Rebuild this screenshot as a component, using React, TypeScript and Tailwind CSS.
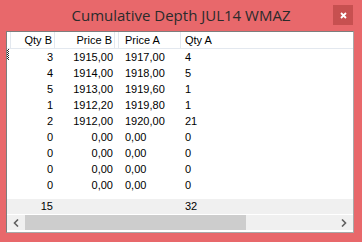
const rows = [
  ['3', '1915,00', '1917,00', '4'],
  ['4', '1914,00', '1918,00', '5'],
  ['5', '1913,00', '1919,60', '1'],
  ['1', '1912,20', '1919,80', '1'],
  ['2', '1912,00', '1920,00', '21'],
  ['0', '0,00', '0,00', '0'],
  ['0', '0,00', '0,00', '0'],
  ['0', '0,00', '0,00', '0'],
  ['0', '0,00', '0,00', '0'],
]

const cols = 'grid grid-cols-[4px_44px_60px_4px_62px_1fr]'

export default function App() {
  return (
    <div className="w-[362px] h-[242px] bg-[#e8686b] flex flex-col">
      {/* Title bar */}
      <div className="h-[31px] grid grid-cols-[1fr_auto_1fr]">
        <div />
        <div className="pt-[3px] text-[15px] leading-[24px] text-[#2b2b2b] font-['Open_Sans',sans-serif]">
          Cumulative Depth JUL14 WMAZ
        </div>
        <div className="flex justify-end pt-[5px] pr-[9px]">
          <div className="w-[20px] h-[20px] bg-[#c75050] flex items-center justify-center">
            <svg width="7" height="7" viewBox="0 0 7 7">
              <path d="M1 1 L6 6 M6 1 L1 6" stroke="#fff" strokeWidth="1.8" />
            </svg>
          </div>
        </div>
      </div>

      {/* Client area */}
      <div className="ml-[6px] w-[348px] h-[202px] border border-[#7d7d7d] border-r-[#a8a8a8] border-b-[#a8a8a8] bg-white flex flex-col font-['Liberation_Sans',Arial,sans-serif] text-[11px] text-black">
        {/* Header */}
        <div className={`${cols} h-[17px] leading-[16px] border-b border-[#e3e8ef]`}>
          <div className="border-r border-[#e3e8ef]" />
          <div className="text-right pr-[2px] border-r border-[#e3e8ef]">Qty B</div>
          <div className="text-right pr-[2px] border-r border-[#e3e8ef]">Price B</div>
          <div className="border-r border-[#e3e8ef]" />
          <div className="pl-[6px] border-r border-[#e3e8ef]">Price A</div>
          <div className="pl-[4px]">Qty A</div>
        </div>

        {/* Rows */}
        <div className="flex flex-col">
          {rows.map((r, i) => (
            <div key={i} className={`${cols} h-[16px] leading-[16px]`}>
              <div className="flex items-start">
                {i === 0 && (
                  <div className="w-[2px] h-[11px] bg-[repeating-conic-gradient(#222_0_25%,#fff_0_50%)] bg-[length:2px_2px]" />
                )}
              </div>
              <div className="text-right pr-[2px]">{r[0]}</div>
              <div className="text-right pr-[2px]">{r[1]}</div>
              <div />
              <div className="pl-[6px]">{r[2]}</div>
              <div className="pl-[4px]">{r[3]}</div>
            </div>
          ))}
        </div>
        <div className="flex-1" />

        {/* Totals */}
        <div className={`${cols} h-[16px] leading-[15px] bg-[#f0f0f0] border-b border-white`}>
          <div />
          <div className="text-right pr-[2px]">15</div>
          <div />
          <div />
          <div />
          <div className="pl-[4px]">32</div>
        </div>

        {/* Horizontal scrollbar */}
        <div className="h-[15px] bg-[#f0f0f0] flex items-stretch">
          <div className="w-[18px] flex items-center justify-center">
            <svg width="6" height="8" viewBox="0 0 6 8">
              <path d="M5 0.5 L1.5 4 L5 7.5" stroke="#606060" strokeWidth="1.6" fill="none" />
            </svg>
          </div>
          <div className="w-[221px] bg-[#cdcdcd]" />
          <div className="flex-1" />
          <div className="w-[18px] flex items-center justify-center">
            <svg width="6" height="8" viewBox="0 0 6 8">
              <path d="M1 0.5 L4.5 4 L1 7.5" stroke="#606060" strokeWidth="1.6" fill="none" />
            </svg>
          </div>
        </div>
        <div className="h-[2px]" />
      </div>
    </div>
  )
}
